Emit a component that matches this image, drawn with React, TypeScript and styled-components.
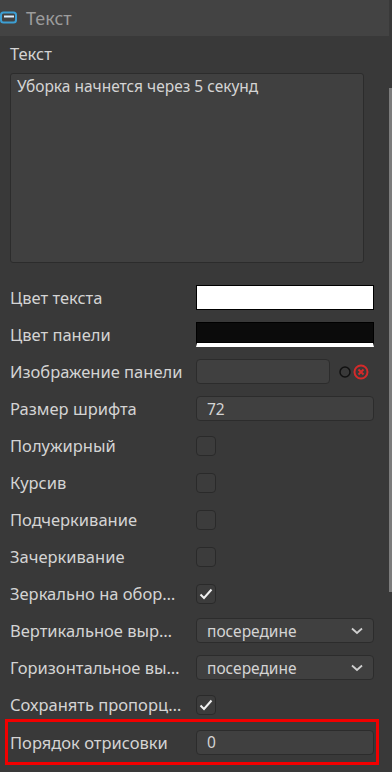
import React from 'react';
import styled, { createGlobalStyle } from 'styled-components';

const GlobalStyle = createGlobalStyle`
    html, body {
        margin: 0;
        padding: 0;
        background: #393939;
        font-family: "Noto Sans", "Open Sans", sans-serif;
    }
`;

const Page = styled.div`
    width: 392px;
    height: 772px;
    display: flex;
    overflow: hidden;
    background: #393939;
`;

const Main = styled.div`
    flex: 1;
    display: flex;
    flex-direction: column;
`;

const Header = styled.div`
    height: 36px;
    background: #434343;
    display: flex;
    align-items: center;
    gap: 8px;
    color: #9c9c9c;
    font-size: 18px;
    box-sizing: border-box;
`;

const Content = styled.div`
    padding: 8px 10px 0 10px;
    display: flex;
    flex-direction: column;
`;

const SectionLabel = styled.div`
    color: #d4d4d4;
    font-size: 16.5px;
    line-height: 20px;
    margin-bottom: 9px;
`;

const TextArea = styled.div`
    width: 354px;
    height: 190px;
    box-sizing: border-box;
    background: #404040;
    border: 1px solid #2c2c2c;
    border-radius: 3px;
    padding: 2px 6px;
    color: #d4d4d4;
    font-size: 15.5px;
    line-height: 20px;
    margin-bottom: 16px;
`;

const Row = styled.div`
    display: flex;
    align-items: center;
    height: 37px;
`;

const HighlightRow = styled(Row)`
    margin-left: -5px;
    padding-left: 2px;
    width: 374px;
    height: 46px;
    margin-top: -4px;
    border: 3px solid #f20000;
    box-sizing: border-box;
`;

const Label = styled.div`
    width: 186px;
    flex-shrink: 0;
    color: #d4d4d4;
    font-size: 16.5px;
    white-space: nowrap;
    overflow: hidden;
    text-overflow: ellipsis;
    box-sizing: border-box;
`;

const Swatch = styled.div<{ $color: string; $stripe?: boolean }>`
    width: 178px;
    height: 25px;
    box-sizing: border-box;
    border: 1px solid #000;
    background: ${(p) => p.$color};
    border-bottom: ${(p) => (p.$stripe ? '4px solid #fff' : '1px solid #000')};
    box-shadow: ${(p) => (p.$stripe ? 'inset 0 -1px 0 #000' : 'none')};
`;

const Field = styled.div<{ $width?: number }>`
    width: ${(p) => p.$width ?? 178}px;
    height: 25px;
    box-sizing: border-box;
    background: #404040;
    border: 1px solid #2c2c2c;
    border-radius: 4px;
    display: flex;
    align-items: center;
    justify-content: space-between;
    padding: 0 10px 0 10px;
    color: #d4d4d4;
    font-size: 15.5px;
`;

const Check = styled.div`
    width: 20px;
    height: 20px;
    box-sizing: border-box;
    background: #3c3c3c;
    border: 1px solid #2a2a2a;
    border-radius: 4px;
    display: flex;
    align-items: center;
    justify-content: center;
`;

const Icons = styled.div`
    display: flex;
    align-items: center;
    gap: 2px;
    margin-left: 9px;
`;

const Scrollbar = styled.div`
    width: 8px;
    display: flex;
    flex-direction: column;
    background: #393939;
`;

const Thumb = styled.div`
    margin-top: 88px;
    height: 504px;
    background: #7c7c7c;
`;

const HeaderIcon = () => (
    <svg width="18" height="14" viewBox="0 0 18 14">
        <rect x="1" y="1.5" width="15" height="10" rx="2.5" fill="none" stroke="#3d9fd4" strokeWidth="2" />
        <path d="M4 5.5 H14" stroke="#dcefff" strokeWidth="2" />
    </svg>
);

const CheckMark = () => (
    <svg width="14" height="12" viewBox="0 0 14 12">
        <path d="M1.5 6.5 L5 10 L12.5 1.5" fill="none" stroke="#f0f0f0" strokeWidth="2" />
    </svg>
);

const Chevron = () => (
    <svg width="12" height="8" viewBox="0 0 12 8">
        <path d="M1 1.5 L6 6 L11 1.5" fill="none" stroke="#cfcfcf" strokeWidth="1.8" />
    </svg>
);

const Select = ({ value }: { value: string }) => (
    <Field>
        <span>{value}</span>
        <Chevron />
    </Field>
);

const App: React.FC = () => {
    return (
        <Page>
            <GlobalStyle />
            <Main>
                <Header>
                    <HeaderIcon />
                    <span>Текст</span>
                </Header>
                <Content>
                    <SectionLabel>Текст</SectionLabel>
                    <TextArea>Уборка начнется через 5 секунд</TextArea>
                    <Row>
                        <Label>Цвет текста</Label>
                        <Swatch $color="#ffffff" />
                    </Row>
                    <Row>
                        <Label>Цвет панели</Label>
                        <Swatch $color="#0b0b0b" $stripe />
                    </Row>
                    <Row>
                        <Label>Изображение панели</Label>
                        <Field $width={134} />
                        <Icons>
                            <svg width="12" height="12" viewBox="0 0 12 12">
                                <circle cx="6" cy="6" r="5" fill="none" stroke="#111" strokeWidth="1.5" />
                            </svg>
                            <svg width="16" height="16" viewBox="0 0 16 16">
                                <circle cx="8" cy="8" r="6.5" fill="none" stroke="#d42a2a" strokeWidth="2" />
                                <path d="M5.5 5.5 L10.5 10.5 M10.5 5.5 L5.5 10.5" stroke="#d42a2a" strokeWidth="2" />
                            </svg>
                        </Icons>
                    </Row>
                    <Row>
                        <Label>Размер шрифта</Label>
                        <Field>72</Field>
                    </Row>
                    <Row>
                        <Label>Полужирный</Label>
                        <Check />
                    </Row>
                    <Row>
                        <Label>Курсив</Label>
                        <Check />
                    </Row>
                    <Row>
                        <Label>Подчеркивание</Label>
                        <Check />
                    </Row>
                    <Row>
                        <Label>Зачеркивание</Label>
                        <Check />
                    </Row>
                    <Row>
                        <Label>Зеркально на обор…</Label>
                        <Check>
                            <CheckMark />
                        </Check>
                    </Row>
                    <Row>
                        <Label>Вертикальное выр…</Label>
                        <Select value="посередине" />
                    </Row>
                    <Row>
                        <Label>Горизонтальное вы…</Label>
                        <Select value="посередине" />
                    </Row>
                    <Row>
                        <Label>Сохранять пропорц…</Label>
                        <Check>
                            <CheckMark />
                        </Check>
                    </Row>
                    <HighlightRow>
                        <Label>Порядок отрисовки</Label>
                        <Field>0</Field>
                    </HighlightRow>
                </Content>
            </Main>
            <Scrollbar>
                <Thumb />
            </Scrollbar>
        </Page>
    );
};

export default App;
